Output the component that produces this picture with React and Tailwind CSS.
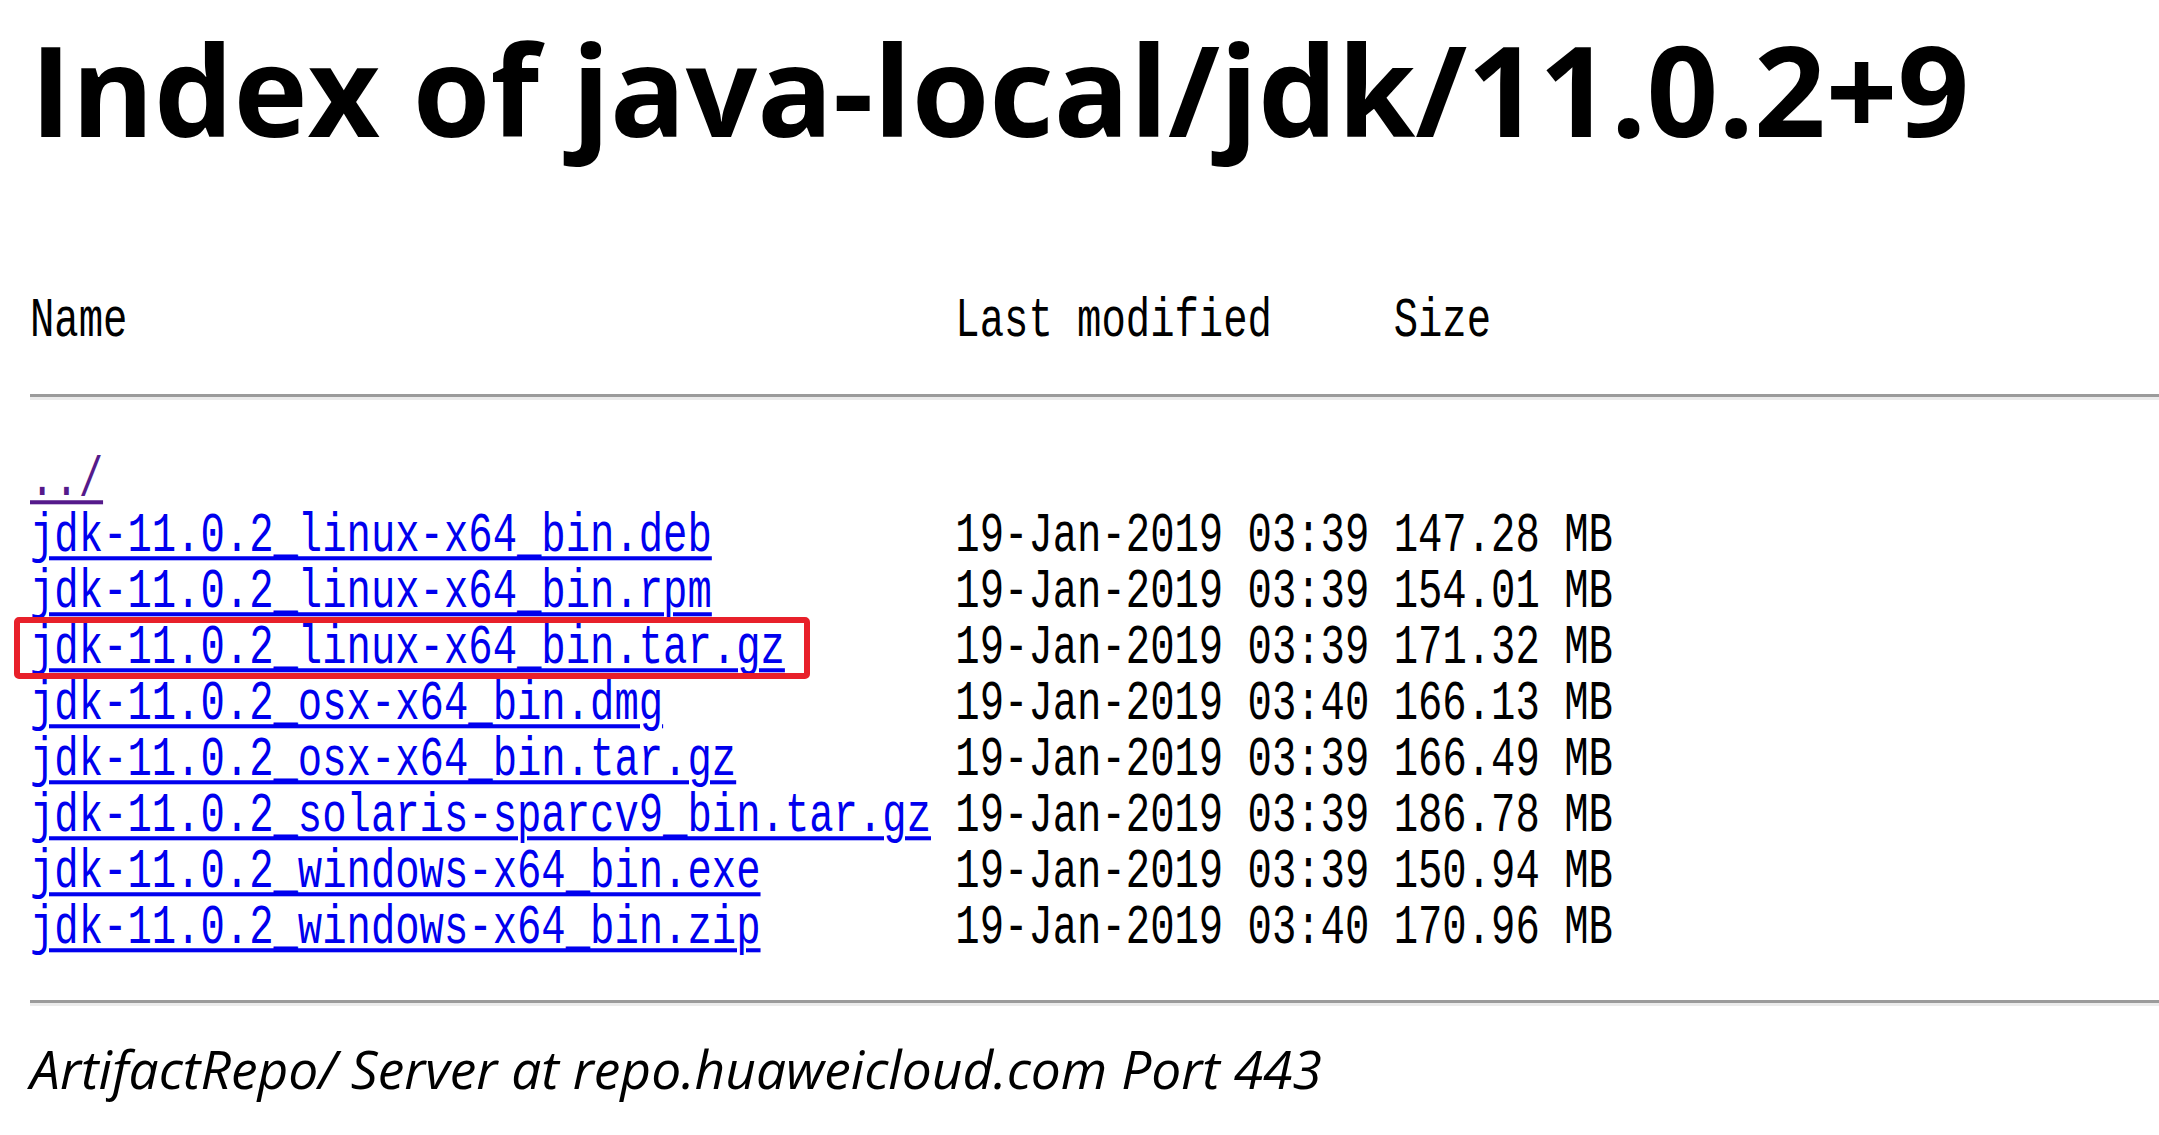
const files = [
  { name: 'jdk-11.0.2_linux-x64_bin.deb', date: '19-Jan-2019 03:39', size: '147.28 MB' },
  { name: 'jdk-11.0.2_linux-x64_bin.rpm', date: '19-Jan-2019 03:39', size: '154.01 MB' },
  { name: 'jdk-11.0.2_linux-x64_bin.tar.gz', date: '19-Jan-2019 03:39', size: '171.32 MB', marked: true },
  { name: 'jdk-11.0.2_osx-x64_bin.dmg', date: '19-Jan-2019 03:40', size: '166.13 MB' },
  { name: 'jdk-11.0.2_osx-x64_bin.tar.gz', date: '19-Jan-2019 03:39', size: '166.49 MB' },
  { name: 'jdk-11.0.2_solaris-sparcv9_bin.tar.gz', date: '19-Jan-2019 03:39', size: '186.78 MB' },
  { name: 'jdk-11.0.2_windows-x64_bin.exe', date: '19-Jan-2019 03:39', size: '150.94 MB' },
  { name: 'jdk-11.0.2_windows-x64_bin.zip', date: '19-Jan-2019 03:40', size: '170.96 MB' },
];

const line = "h-[56px] leading-[56px] whitespace-pre scale-y-[1.35] font-['Liberation_Mono',monospace] text-[40.6px] text-black";
const link = 'underline decoration-[3px] underline-offset-[4px]';

function Rule() {
  return <div className="h-[6px] border-t-[3px] border-b-[3px] border-t-[#9b9b9b] border-b-[#ebebeb]" />;
}

function FileRow({ file }) {
  return (
    <div className="relative">
      <div className={line}>
        <a href="#" className={`${link} text-[#0000ee]`}>{file.name}</a>
        {' '.repeat(38 - file.name.length)}
        {file.date} {file.size}
      </div>
      {file.marked && (
        <div className="absolute -left-[16px] top-[-3px] w-[796px] h-[62px] border-[6px] border-[#e8202a] rounded-[5px]" />
      )}
    </div>
  );
}

export default function App() {
  return (
    <div className="min-h-screen bg-white pl-[30px] text-black">
      <h1 className="mt-[26px] text-[125.5px] leading-none font-bold font-['Open_Sans',sans-serif] whitespace-nowrap">
        Index of java-local/jdk/11.0.2+9
      </h1>

      <div className="mt-[141px]">
        <div className={line}>
          {'Name' + ' '.repeat(34)}Last modified{'     '}Size
        </div>
      </div>

      <div className="mt-[45px]">
        <Rule />
      </div>

      <div className="mt-[52px]">
        <div className={line}>
          <a href="#" className={`${link} text-[#551a8b]`}>../</a>
        </div>
        {files.map(f => (
          <FileRow key={f.name} file={f} />
        ))}
      </div>

      <div className="mt-[44px]">
        <Rule />
      </div>

      <address className="mt-[35px] h-[56px] leading-[56px] text-[53.3px] italic font-['Open_Sans',sans-serif] whitespace-nowrap">
        ArtifactRepo/ Server at repo.huaweicloud.com Port 443
      </address>
    </div>
  );
}
